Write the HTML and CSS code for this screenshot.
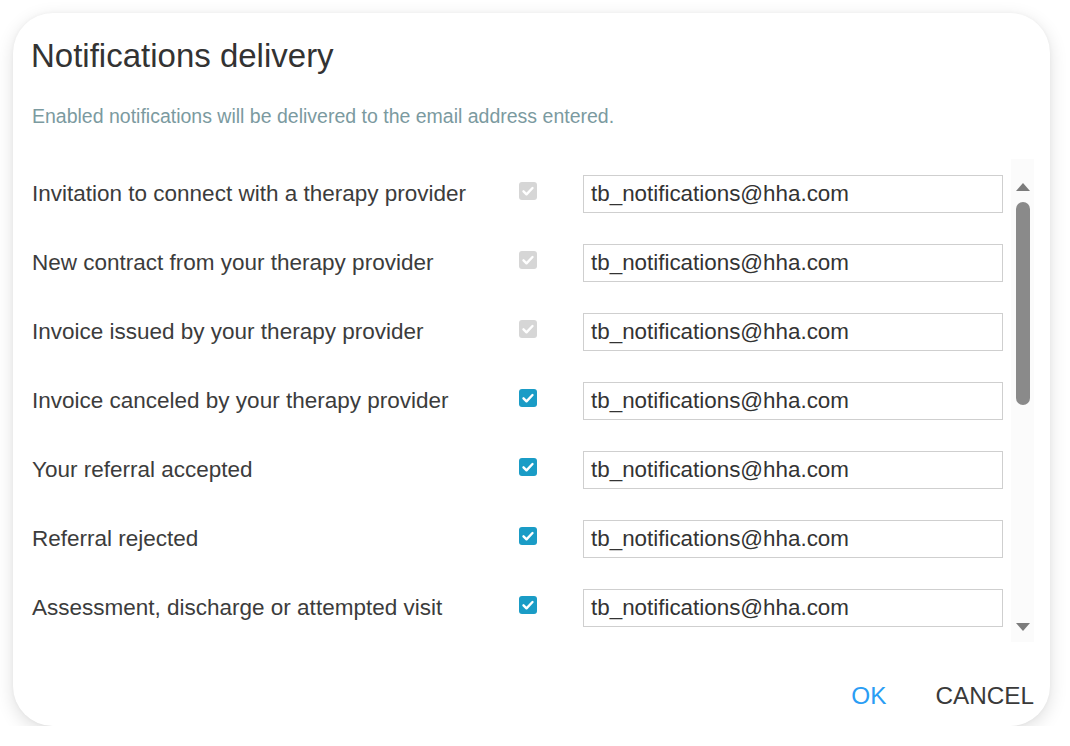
FILE: index.html
```html
<!DOCTYPE html>
<html>
<head>
<meta charset="utf-8">
<link rel="stylesheet" href="styles.css">
</head>
<body>
<div class="dialog">
  <h1 class="title">Notifications delivery</h1>
  <p class="subtitle">Enabled notifications will be delivered to the email address entered.</p>
  <div class="body">
    <div class="list">
      <div class="row"><span class="label">Invitation to connect with a therapy provider</span><span class="cb disabled"><svg viewBox="0 0 18 18"><path d="M4.5 9.3l3 3 6-6.3" /></svg></span><span class="field">tb_notifications@hha.com</span></div>
      <div class="row"><span class="label">New contract from your therapy provider</span><span class="cb disabled"><svg viewBox="0 0 18 18"><path d="M4.5 9.3l3 3 6-6.3" /></svg></span><span class="field">tb_notifications@hha.com</span></div>
      <div class="row"><span class="label">Invoice issued by your therapy provider</span><span class="cb disabled"><svg viewBox="0 0 18 18"><path d="M4.5 9.3l3 3 6-6.3" /></svg></span><span class="field">tb_notifications@hha.com</span></div>
      <div class="row"><span class="label">Invoice canceled by your therapy provider</span><span class="cb on"><svg viewBox="0 0 18 18"><path d="M4.5 9.3l3 3 6-6.3" /></svg></span><span class="field">tb_notifications@hha.com</span></div>
      <div class="row"><span class="label">Your referral accepted</span><span class="cb on"><svg viewBox="0 0 18 18"><path d="M4.5 9.3l3 3 6-6.3" /></svg></span><span class="field">tb_notifications@hha.com</span></div>
      <div class="row"><span class="label">Referral rejected</span><span class="cb on"><svg viewBox="0 0 18 18"><path d="M4.5 9.3l3 3 6-6.3" /></svg></span><span class="field">tb_notifications@hha.com</span></div>
      <div class="row"><span class="label">Assessment, discharge or attempted visit</span><span class="cb on"><svg viewBox="0 0 18 18"><path d="M4.5 9.3l3 3 6-6.3" /></svg></span><span class="field">tb_notifications@hha.com</span></div>
    </div>
    <div class="scrollbar">
      <span class="arrow up"></span>
      <div class="track"><div class="thumb"></div></div>
      <span class="arrow down"></span>
    </div>
  </div>
  <div class="actions">
    <button class="btn ok">OK</button>
    <button class="btn cancel">CANCEL</button>
  </div>
</div>
</body>
</html>
```

FILE: styles.css
```css
html, body {
  margin: 0;
  padding: 0;
  background: #ffffff;
  font-family: "Liberation Sans", Arial, sans-serif;
}
.dialog {
  margin: 13px 0 0 13px;
  width: 1037px;
  height: 713px;
  box-sizing: border-box;
  background: #fff;
  border-radius: 40px;
  box-shadow: 0 5px 18px rgba(0, 0, 0, 0.13), 0 0 4px rgba(0, 0, 0, 0.04);
  padding: 24px 0 0 18px;
  display: flex;
  flex-direction: column;
}
.title {
  margin: 0;
  font-size: 33px;
  font-weight: normal;
  color: #333;
  line-height: 38px;
}
.subtitle {
  margin: 29px 0 0 1px;
  font-size: 19.5px;
  line-height: 24px;
  color: #7b9aa0;
}
.body {
  margin-top: 31px;
  display: flex;
  height: 483px;
}
.list {
  width: 980px;
  overflow: hidden;
}
.row {
  height: 69px;
  display: flex;
  align-items: center;
}
.label {
  width: 487px;
  padding-left: 1px;
  font-size: 22.5px;
  color: #3c3c3c;
}
.cb {
  width: 18px;
  height: 18px;
  border-radius: 3px;
  display: flex;
  margin-top: -5px;
}
.cb svg {
  width: 18px;
  height: 18px;
}
.cb path {
  fill: none;
  stroke: #fff;
  stroke-width: 2.4;
  stroke-linecap: round;
  stroke-linejoin: round;
}
.cb.disabled {
  background: #d6d6d6;
}
.cb.on {
  background: #1a9cc6;
}
.field {
  margin-left: 46px;
  width: 420px;
  height: 38px;
  box-sizing: border-box;
  border: 1px solid #cfcfcf;
  padding: 0 7px;
  display: flex;
  align-items: center;
  font-size: 22.4px;
  color: #333;
}
.scrollbar {
  width: 23px;
  height: 483px;
  background: #fbfbfb;
  display: flex;
  flex-direction: column;
  align-items: center;
  padding-top: 24px;
  box-sizing: border-box;
}
.arrow {
  width: 0;
  height: 0;
  border-left: 7.5px solid transparent;
  border-right: 7.5px solid transparent;
}
.arrow.up {
  border-bottom: 8px solid #7c7c7c;
}
.arrow.down {
  border-top: 8px solid #7c7c7c;
}
.track {
  height: 432px;
  padding-top: 11px;
  box-sizing: border-box;
}
.thumb {
  width: 14px;
  height: 203px;
  border-radius: 7px;
  background: #8a8a8a;
}
.actions {
  margin-top: auto;
  margin-bottom: 16px;
  display: flex;
  justify-content: flex-end;
  padding-right: 16px;
  gap: 49px;
}
.btn {
  background: none;
  border: none;
  padding: 0;
  font-family: "Liberation Sans", Arial, sans-serif;
  font-size: 24.3px;
  line-height: 28px;
  cursor: pointer;
}
.btn.ok {
  color: #2a9df4;
}
.btn.cancel {
  color: #3a3a3a;
}
```
